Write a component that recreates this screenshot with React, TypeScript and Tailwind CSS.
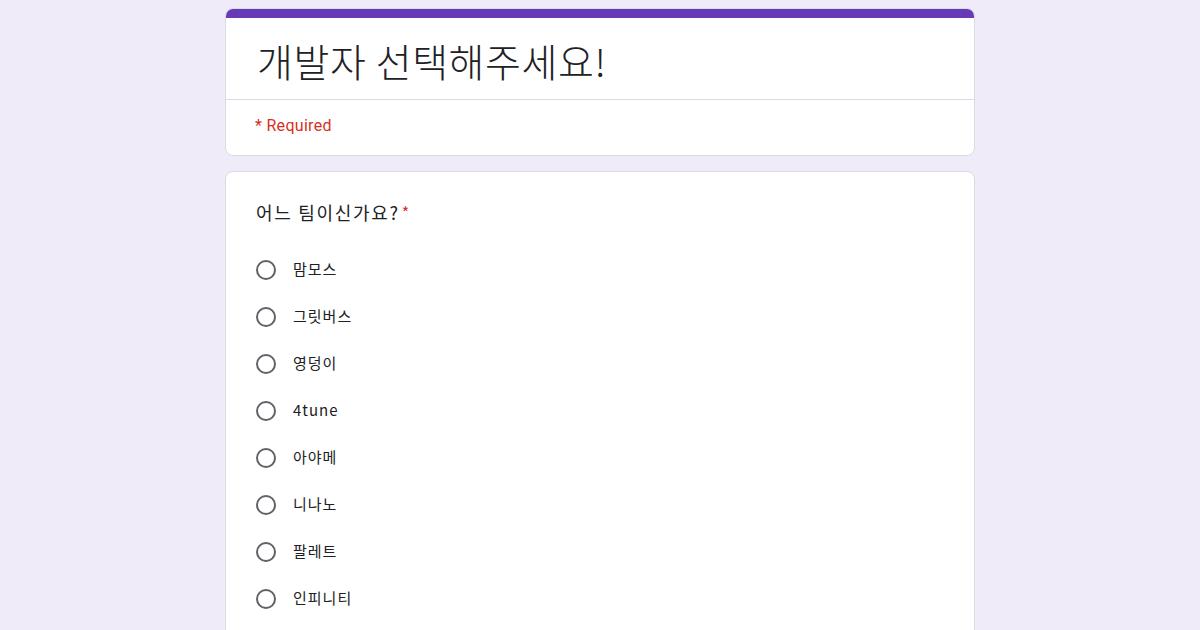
const options = ["맘모스", "그릿버스", "영덩이", "4tune", "아야메", "니나노", "팔레트", "인피니티"];

const font = { fontFamily: '"Noto Sans CJK KR", Roboto, sans-serif' };

function Radio({ label }: { label: string }) {
  return (
    <div className="flex items-center h-[47px]">
      <div className="w-5 h-5 rounded-full border-2 border-[#5f6368] shrink-0" />
      <span className="ml-[17px] text-[15px] text-[#202124] tracking-[1px]">{label}</span>
    </div>
  );
}

export default function App() {
  return (
    <div className="min-h-screen bg-[#f0ebf8] overflow-hidden h-[630px]" style={font}>
      <div className="mx-auto w-[750px] pt-2">
        <div className="rounded-lg bg-white border border-[#dadce0] overflow-hidden">
          <div className="h-[10px] bg-[#673ab7] -mx-px -mt-px" />
          <div className="h-[82px] border-b border-[#dadce0] px-[31px] flex items-center">
            <h1 className="text-[39px] leading-none text-[#202124] font-light tracking-[0.6px] pt-1">개발자 선택해주세요!</h1>
          </div>
          <div className="h-[55px] px-[29px] flex items-center pb-1">
            <span className="text-[16px] text-[#d93025] tracking-[0.3px] font-['Roboto']">* Required</span>
          </div>
        </div>

        <div className="mt-[15px] rounded-lg bg-white border border-[#dadce0] px-[30px] pt-[24px] pb-6">
          <div className="text-[18px] text-[#202124] tracking-[1.7px] h-[32px] flex items-center">
            어느 팀이신가요?<span className="text-[#d93025] text-[16px] ml-[2px]">*</span>
          </div>
          <div className="mt-[18px]">
            {options.map((o) => (
              <Radio key={o} label={o} />
            ))}
          </div>
        </div>
      </div>
    </div>
  );
}
